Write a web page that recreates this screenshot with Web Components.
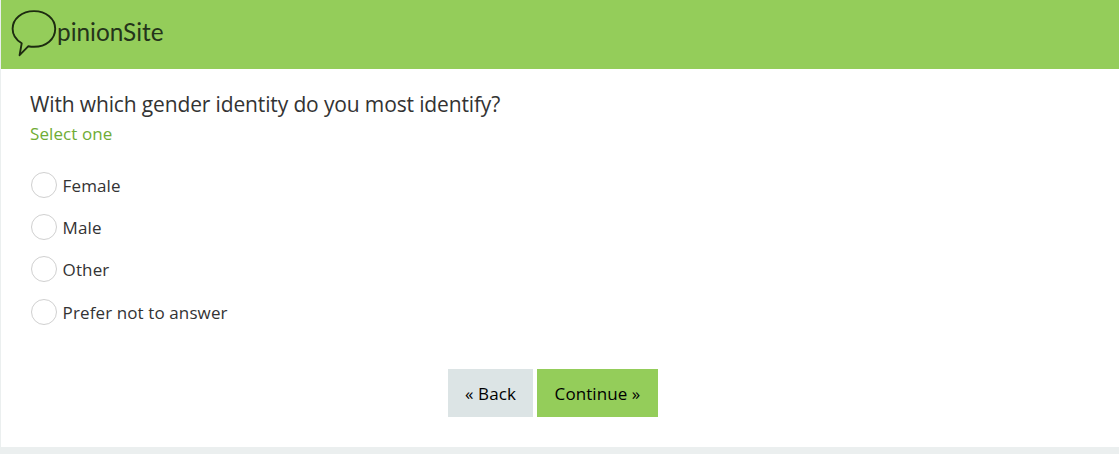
<!DOCTYPE html>
<html lang="en">
<head>
<meta charset="UTF-8">
<title>OpinionSite</title>
<style>
    body {
        margin: 0;
        background-color: #ebefef;
        font-family: "Open Sans", "Noto Sans", sans-serif;
        color: #333333;
    }
</style>
</head>
<body>
<survey-page>
    <site-header slot="header"></site-header>
    <survey-question>
        <span slot="title">With which gender identity do you most identify?</span>
        <span slot="hint">Select one</span>
        <radio-option>Female</radio-option>
        <radio-option>Male</radio-option>
        <radio-option>Other</radio-option>
        <radio-option>Prefer not to answer</radio-option>
    </survey-question>
    <nav-button slot="nav" style="--w: 85px">« Back</nav-button>
    <nav-button slot="nav" style="--w: 121px; --bg: #94cd5a">Continue »</nav-button>
</survey-page>

<script>
class SurveyPage extends HTMLElement {
    connectedCallback() {
        this.attachShadow({ mode: 'open' });
        this.shadowRoot.innerHTML = `
            <style>
                :host {
                    display: block;
                    box-sizing: border-box;
                    height: 454px;
                    padding: 0 0 7px 1px;
                    overflow: hidden;
                }
                main {
                    height: 447px;
                    background-color: white;
                }
                nav {
                    display: flex;
                    gap: 4px;
                    margin: 36px 0 0 447px;
                }
            </style>
            <main>
                <slot name="header"></slot>
                <slot></slot>
                <nav><slot name="nav"></slot></nav>
            </main>
        `;
    }
}
customElements.define('survey-page', SurveyPage);

class SiteHeader extends HTMLElement {
    connectedCallback() {
        this.attachShadow({ mode: 'open' });
        this.shadowRoot.innerHTML = `
            <style>
                :host {
                    display: block;
                    height: 69px;
                    background-color: #94cd5a;
                }
                svg {
                    display: block;
                    margin-left: -1px;
                }
                text {
                    font: 25px Lato, sans-serif;
                    fill: #24341a;
                }
            </style>
            <svg width="180" height="69" viewBox="0 0 180 69">
                <path d="M21.7 43.3 C15.8 39.8 12.6 34.8 12.6 28.8 C12.6 18.8 21.8 11.1 34 11.1 C46.2 11.1 55.2 18.8 55.2 28.8 C55.2 39.3 46.2 46.8 34 46.8 C31.8 46.8 30.2 46.6 28.4 46.2 L19.6 55.2 Z"
                    fill="none" stroke="#1d2b10" stroke-width="1.9" stroke-linejoin="round"/>
                <text x="57" y="40.7" textLength="106.5" lengthAdjust="spacingAndGlyphs">pinionSite</text>
            </svg>
        `;
    }
}
customElements.define('site-header', SiteHeader);

class SurveyQuestion extends HTMLElement {
    connectedCallback() {
        this.attachShadow({ mode: 'open' });
        this.shadowRoot.innerHTML = `
            <style>
                :host {
                    display: block;
                    padding: 20px 29px 0;
                }
                h1 {
                    margin: 0;
                    font-size: 21px;
                    font-weight: 400;
                    line-height: 30px;
                    letter-spacing: -0.14px;
                }
                p {
                    margin: 0;
                    font-size: 17px;
                    line-height: 30px;
                    letter-spacing: 0.08px;
                    color: #6fac35;
                }
                .options {
                    display: flex;
                    flex-direction: column;
                    margin-top: 15px;
                }
            </style>
            <h1><slot name="title"></slot></h1>
            <p><slot name="hint"></slot></p>
            <div class="options"><slot></slot></div>
        `;
    }
}
customElements.define('survey-question', SurveyQuestion);

class RadioOption extends HTMLElement {
    connectedCallback() {
        this.attachShadow({ mode: 'open' });
        this.shadowRoot.innerHTML = `
            <style>
                :host {
                    display: flex;
                    align-items: center;
                    height: 42.25px;
                    font-size: 17px;
                    line-height: 24px;
                    letter-spacing: 0.11px;
                }
                .circle {
                    box-sizing: border-box;
                    width: 26px;
                    height: 26px;
                    margin: 0 5.6px 0.3px 1px;
                    border: 1px solid #d0d0d0;
                    border-radius: 50%;
                }
                .label {
                    padding-top: 1.3px;
                }
            </style>
            <span class="circle"></span>
            <span class="label"><slot></slot></span>
        `;
    }
}
customElements.define('radio-option', RadioOption);

class NavButton extends HTMLElement {
    connectedCallback() {
        this.attachShadow({ mode: 'open' });
        this.shadowRoot.innerHTML = `
            <style>
                :host {
                    display: block;
                    width: var(--w);
                }
                button {
                    display: block;
                    width: 100%;
                    height: 48px;
                    padding: 0;
                    border: 0;
                    background-color: var(--bg, #dce4e5);
                    color: #000;
                    font-family: inherit;
                    font-size: 17px;
                    letter-spacing: 0.08px;
                    white-space: nowrap;
                }
            </style>
            <button type="button"><slot></slot></button>
        `;
    }
}
customElements.define('nav-button', NavButton);
</script>
</body>
</html>
